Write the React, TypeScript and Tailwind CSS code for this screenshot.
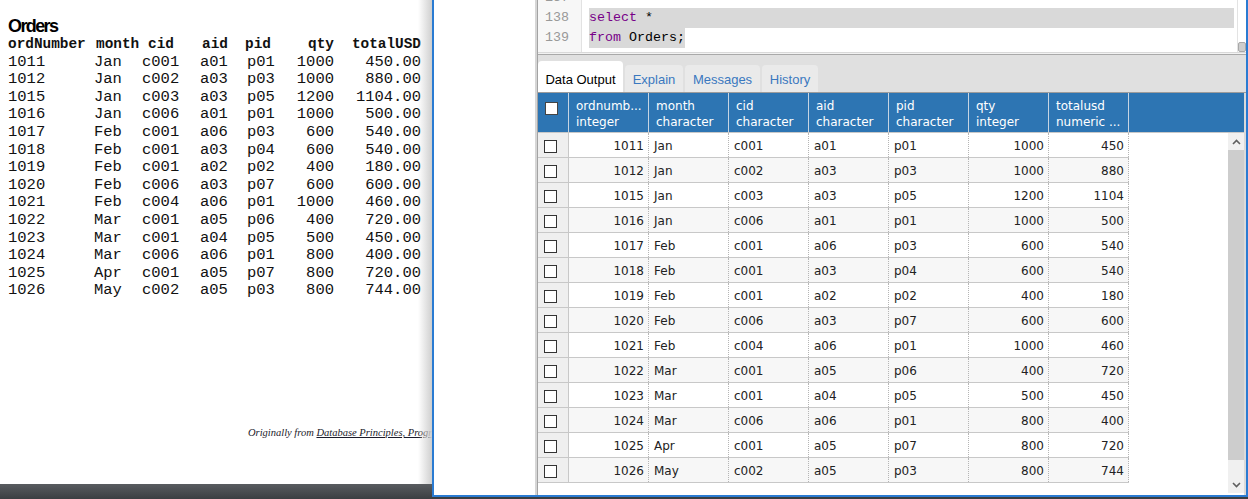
import React from 'react';

const orders = [
  ['1011', 'Jan', 'c001', 'a01', 'p01', '1000', '450.00'],
  ['1012', 'Jan', 'c002', 'a03', 'p03', '1000', '880.00'],
  ['1015', 'Jan', 'c003', 'a03', 'p05', '1200', '1104.00'],
  ['1016', 'Jan', 'c006', 'a01', 'p01', '1000', '500.00'],
  ['1017', 'Feb', 'c001', 'a06', 'p03', '600', '540.00'],
  ['1018', 'Feb', 'c001', 'a03', 'p04', '600', '540.00'],
  ['1019', 'Feb', 'c001', 'a02', 'p02', '400', '180.00'],
  ['1020', 'Feb', 'c006', 'a03', 'p07', '600', '600.00'],
  ['1021', 'Feb', 'c004', 'a06', 'p01', '1000', '460.00'],
  ['1022', 'Mar', 'c001', 'a05', 'p06', '400', '720.00'],
  ['1023', 'Mar', 'c001', 'a04', 'p05', '500', '450.00'],
  ['1024', 'Mar', 'c006', 'a06', 'p01', '800', '400.00'],
  ['1025', 'Apr', 'c001', 'a05', 'p07', '800', '720.00'],
  ['1026', 'May', 'c002', 'a05', 'p03', '800', '744.00'],
];

const pdfHeaders = ['ordNumber', 'month', 'cid', 'aid', 'pid', 'qty', 'totalUSD'];
const pdfCols = ['w-[86px]', 'w-[48px]', 'w-[58px]', 'w-[45px]', 'w-[42px]', 'w-[47px] text-right', 'w-[87px] text-right'];
const pdfHeadPad = ['', 'pl-[2px]', 'pl-[6px]', 'pl-[2px]', '', '', ''];
const pdfDataPad = ['', '', '', '', 'pl-[2px]', '', ''];

const gridHeaders = [
  ['ordnumb...', 'integer'],
  ['month', 'character'],
  ['cid', 'character'],
  ['aid', 'character'],
  ['pid', 'character'],
  ['qty', 'integer'],
  ['totalusd', 'numeric ...'],
];
const numeric = [true, false, false, false, false, true, true];

function PdfPage() {
  return (
    <div className="w-[432px] h-full shrink-0 flex flex-col">
      <div className="relative h-[484px] bg-white overflow-hidden pt-[17px]">
        <div className="pl-[8px] h-[19px] leading-[19px] text-[18px] font-bold tracking-[-1.6px] text-black font-['Liberation_Sans',Arial,sans-serif]">
          Orders
        </div>
        <div className="font-['Liberation_Mono','Courier_New',monospace] text-[15.5px] text-[#111]">
          <div className="flex pl-[8px] h-[17.6px] leading-[17.6px] font-bold text-[14.4px]">
            {pdfHeaders.map((h, i) => (
              <div key={h} className={`${pdfCols[i]} ${pdfHeadPad[i]} whitespace-nowrap`}>{h}</div>
            ))}
          </div>
          {orders.map(r => (
            <div key={r[0]} className="flex pl-[8px] h-[17.6px] leading-[17.6px]">
              {r.map((v, i) => (
                <div key={i} className={`${pdfCols[i]} ${pdfDataPad[i]} whitespace-nowrap`}>{v}</div>
              ))}
            </div>
          ))}
        </div>
        <div className="mt-[126px] pl-[248px] whitespace-nowrap italic text-[10.5px] leading-[14px] text-[#1b1b2b] font-['Liberation_Serif','Times_New_Roman',serif]">
          Originally from <span className="underline">Database Principles, Programming, and Performance</span>
        </div>
        {/* window shadow on the page edge */}
        <div className="absolute right-0 top-0 h-full w-[14px] bg-gradient-to-r from-white/0 to-[#cfcfcf]" />
      </div>
      <div className="flex-1 bg-gradient-to-b from-[#595c60] to-[#3b3e42]" />
    </div>
  );
}

function Editor() {
  const mono = "font-['Liberation_Mono','Courier_New',monospace] text-[13.33px]";
  return (
    <div className="h-[52px] flex overflow-hidden bg-white">
      <div className={`w-[44px] shrink-0 bg-[#f7f7f7] border-r border-[#e2e2e2] ${mono} text-[#999]`}>
        <div className="-mt-[12px]">
          <div className="h-[20px] leading-[20px] pl-[7px]">137</div>
          <div className="h-[20px] leading-[20px] pl-[7px]">138</div>
          <div className="h-[20px] leading-[20px] pl-[7px]">139</div>
        </div>
      </div>
      <div className={`flex-1 pl-[7px] pr-[3px] ${mono} text-black`}>
        <div className="-mt-[12px]">
          <div className="h-[20px] leading-[20px]"></div>
          <div className="h-[20px] leading-[20px] bg-[#d9d9d9] whitespace-pre">
            <span className="text-[#770088]">select</span> *
          </div>
          <div className="h-[20px] leading-[20px] whitespace-pre">
            <span className="bg-[#d9d9d9] inline-block h-[20px]">
              <span className="text-[#770088]">from</span> Orders;
            </span>
          </div>
        </div>
      </div>
      <div className="w-[9px] shrink-0 border-l border-[#e3e3e3] flex flex-col justify-end">
        <div className="h-[10px] bg-[#cdcdcd] border border-[#a8a8a8] rounded-[2px]" />
      </div>
    </div>
  );
}

function Tabs() {
  return (
    <div className="h-[38px] bg-[#e0e0e0] border-b border-[#9c9c9c] flex items-end gap-[2px] font-['Liberation_Sans',Arial,sans-serif] text-[13px] leading-[16px]">
      <div className="w-[85px] h-[31px] bg-white rounded-t-[4px] text-center pt-[11px] text-black">Data Output</div>
      <div className="w-[58px] h-[27px] bg-[#eaeaea] rounded-t-[4px] text-center pt-[7px] text-[#3a78bf]">Explain</div>
      <div className="w-[75px] h-[27px] bg-[#eaeaea] rounded-t-[4px] text-center pt-[7px] text-[#3a78bf]">Messages</div>
      <div className="w-[56px] h-[27px] bg-[#eaeaea] rounded-t-[4px] text-center pt-[7px] text-[#3a78bf]">History</div>
    </div>
  );
}

function Chevron({ up }: { up: boolean }) {
  return (
    <svg width="9" height="6" viewBox="0 0 9 6">
      <path d={up ? 'M1 5 L4.5 1.5 L8 5' : 'M1 1 L4.5 4.5 L8 1'} fill="none" stroke="#5f5f5f" strokeWidth="1.6" />
    </svg>
  );
}

function Grid() {
  return (
    <div className="flex-1 flex flex-col min-h-0 border-r-2 border-[#dadada] pb-[2px] bg-white font-['DejaVu_Sans',Verdana,sans-serif] text-[12px]">
      <div className="h-[40px] flex bg-[#2d75b3] border-b border-[#c8c8c8] text-white leading-[16px]">
        <div className="w-[30px] shrink-0 pl-[7px] pt-[9px]">
          <div className="w-[13px] h-[13px] bg-white border border-[#444]" />
        </div>
        {gridHeaders.map(h => (
          <div key={h[0]} className="w-[80px] shrink-0 border-l border-[#c5d4e3] pl-[7px] pt-[5px] whitespace-nowrap">
            <div>{h[0]}</div>
            <div>{h[1]}</div>
          </div>
        ))}
        <div className="flex-1 border-l border-[#c5d4e3]" />
      </div>
      <div className="flex-1 flex min-h-0">
        <div className="flex-1 text-[#222]">
          {orders.map((r, idx) => (
            <div
              key={r[0]}
              className={`w-[591px] h-[25px] flex border-b border-[#c8c8c8] leading-[24px] ${idx % 2 === 1 ? 'bg-[#f7f7f7]' : 'bg-white'}`}
            >
              <div className="w-[30px] shrink-0 bg-[#efefef] flex items-center pl-[6px] pt-[2px]">
                <div className="w-[13px] h-[13px] bg-white border border-[#333]" />
              </div>
              {r.map((v, i) => (
                <div
                  key={i}
                  className={`w-[80px] shrink-0 pt-[1px] border-l ${i === 0 ? 'border-solid border-[#c8c8c8]' : 'border-dotted border-[#b5b5b5]'} ${
                    i === 6 ? 'w-[81px] border-r border-r-[#b5b5b5] border-dotted' : ''
                  } ${numeric[i] ? 'text-right pr-[4px]' : 'pl-[5px]'}`}
                >
                  {i === 6 ? String(Number(v)) : v}
                </div>
              ))}
            </div>
          ))}
        </div>
        <div className="w-[16px] shrink-0 flex flex-col bg-[#f0f0f0]">
          <div className="h-[17px] flex items-center justify-center">
            <Chevron up />
          </div>
          <div className="h-[310px] bg-[#cdcdcd]" />
          <div className="flex-1" />
          <div className="h-[17px] flex items-center justify-center">
            <Chevron up={false} />
          </div>
        </div>
      </div>
    </div>
  );
}

export default function App() {
  return (
    <div className="w-[1248px] h-[499px] overflow-hidden bg-[#3b3e41] flex items-start">
      <PdfPage />
      <div className="w-[816px] h-[497px] shrink-0 border-x-2 border-b-2 border-[#2a7bd2] bg-white flex">
        <div className="w-[101px] shrink-0 bg-white" />
        <div className="w-[3px] shrink-0 bg-[#d6d6d6] border-r border-[#a3a3a3]" />
        <div className="flex-1 min-w-0 flex flex-col">
          <Editor />
          <div className="h-[3px] bg-[#f2f2f2] border-t border-[#d9d9d9] border-b border-b-[#a9a9a9]" />
          <Tabs />
          <Grid />
        </div>
      </div>
    </div>
  );
}
